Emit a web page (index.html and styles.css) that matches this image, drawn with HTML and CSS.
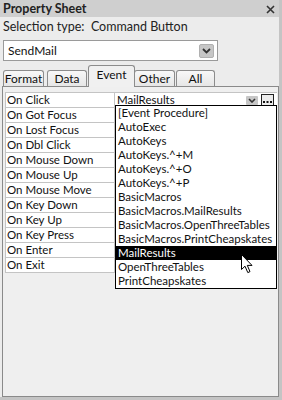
FILE: index.html
```html
<!DOCTYPE html>
<html>
<head>
<meta charset="utf-8">
<link rel="stylesheet" href="styles.css">
</head>
<body>
<div class="sheet">
  <div class="titlebar">
    <span class="title">Property Sheet</span>
    <svg class="close" width="9" height="9" viewBox="0 0 9 9"><path d="M1 1L8 8M8 1L1 8" stroke="#333" stroke-width="1.6"/></svg>
  </div>
  <div class="seltype">Selection type:&nbsp;&nbsp;Command Button</div>
  <div class="combo">
    <span class="combo-text">SendMail</span>
    <span class="dd-btn"><svg width="9" height="6" viewBox="0 0 9 6"><path d="M1 1L4.5 4.5L8 1" fill="none" stroke="#333" stroke-width="1.8"/></svg></span>
  </div>
  <div class="tabs">
    <div class="tab tab-format">Format</div>
    <div class="tab tab-data">Data</div>
    <div class="tab tab-event active">Event</div>
    <div class="tab tab-other">Other</div>
    <div class="tab tab-all">All</div>
  </div>
  <div class="page">
    <div class="grid">
      <div class="row"><div class="label">On Click</div><div class="value"><span class="val-text">MailResults</span><span class="cell-dd"><svg width="8" height="5" viewBox="0 0 8 5"><path d="M1 1L4 4L7 1" fill="none" stroke="#333" stroke-width="1.6"/></svg></span><span class="builder"><svg width="9" height="3" viewBox="0 0 9 3"><rect x="0" y="1" width="2" height="2" fill="#111"/><rect x="3.5" y="1" width="2" height="2" fill="#111"/><rect x="7" y="1" width="2" height="2" fill="#111"/></svg></span></div></div>
      <div class="row"><div class="label">On Got Focus</div><div class="value"></div></div>
      <div class="row"><div class="label">On Lost Focus</div><div class="value"></div></div>
      <div class="row"><div class="label">On Dbl Click</div><div class="value"></div></div>
      <div class="row"><div class="label">On Mouse Down</div><div class="value"></div></div>
      <div class="row"><div class="label">On Mouse Up</div><div class="value"></div></div>
      <div class="row"><div class="label">On Mouse Move</div><div class="value"></div></div>
      <div class="row"><div class="label">On Key Down</div><div class="value"></div></div>
      <div class="row"><div class="label">On Key Up</div><div class="value"></div></div>
      <div class="row"><div class="label">On Key Press</div><div class="value"></div></div>
      <div class="row"><div class="label">On Enter</div><div class="value"></div></div>
      <div class="row"><div class="label">On Exit</div><div class="value"></div></div>
    </div>
    <ul class="list">
      <li>[Event Procedure]</li>
      <li>AutoExec</li>
      <li>AutoKeys</li>
      <li>AutoKeys.^+M</li>
      <li>AutoKeys.^+O</li>
      <li>AutoKeys.^+P</li>
      <li>BasicMacros</li>
      <li>BasicMacros.MailResults</li>
      <li>BasicMacros.OpenThreeTables</li>
      <li>BasicMacros.PrintCheapskates</li>
      <li class="sel">MailResults</li>
      <li>OpenThreeTables</li>
      <li>PrintCheapskates</li>
    </ul>
    <svg class="cursor" width="13" height="20" viewBox="0 0 13 20"><path d="M0.5 0.5L0.5 15.5L4 12.2L6.8 18.6L9 17.6L6.3 11.4L11 11.4Z" fill="#fff" stroke="#000" stroke-width="1" stroke-linejoin="miter"/></svg>
  </div>
</div>
</body>
</html>
```

FILE: styles.css
```css
* { box-sizing: border-box; }
html, body { margin: 0; padding: 0; }
body {
  background: #c4c4c4;
  width: 282px;
  height: 400px;
  font-family: Lato, "Noto Sans", sans-serif;
  font-size: 11.5px;
  color: #111;
}
.sheet {
  width: 279px;
  height: 397px;
  background: #ececec;
  display: flex;
  flex-direction: column;
}
.titlebar {
  height: 17px;
  background: #cfcfcf;
  display: flex;
  align-items: center;
  justify-content: space-between;
  padding: 0 4px 0 3px;
}
.title {
  font-weight: bold;
  font-size: 12.5px;
  color: #222;
}
.close { margin-top: 2px; }
.seltype {
  height: 19px;
  padding: 2px 0 0 3px;
  font-size: 12.5px;
  color: #222;
  line-height: 16px;
}
.combo {
  margin: 4px 0 0 3px;
  width: 215px;
  height: 21px;
  background: #fff;
  border: 1px solid #9a9a9a;
  display: flex;
  align-items: center;
  justify-content: space-between;
  padding: 0 3px 0 4px;
}
.combo-text { font-size: 12px; }
.dd-btn {
  width: 15px;
  height: 14px;
  background: #c6c6c6;
  border: 1px solid #b0b0b0;
  border-radius: 2px;
  display: flex;
  align-items: center;
  justify-content: center;
}
.tabs {
  margin-top: 4px;
  height: 21px;
  display: flex;
  align-items: flex-end;
  position: relative;
  z-index: 1;
}
.tab {
  height: 16px;
  border: 1px solid #8c8c8c;
  border-bottom: none;
  border-radius: 3px 3px 0 0;
  background: linear-gradient(#f8f8f8, #e6e6e6);
  font-size: 12px;
  line-height: 15px;
  text-align: center;
  color: #111;
}
.tab-format { margin-left: 3px; width: 41px; }
.tab-data { margin-left: 3px; width: 40px; }
.tab-event { margin-left: 1px; width: 47px; }
.tab-other { margin-left: -1px; width: 41px; }
.tab-all { margin-left: 1px; width: 39px; }
.tab.active {
  height: 22px;
  margin-bottom: -1px;
  background: #f0f0f0;
  line-height: 17px;
}
.page {
  position: relative;
  margin-left: 2px;
  width: 277px;
  height: 311px;
  border: 1px solid #8a8a8a;
  background: #efefef;
  padding: 5px 0 0 2px;
}
.grid {
  width: 272px;
  background: #fff;
  border-top: 1px solid #c4c4c4;
  border-left: 1px solid #c4c4c4;
}
.row {
  height: 15px;
  display: flex;
  border-bottom: 1px solid #c4c4c4;
}
.label {
  width: 109px;
  border-right: 1px solid #c4c4c4;
  padding-left: 1px;
  line-height: 14px;
}
.value {
  flex: 1;
  display: flex;
  align-items: center;
  padding-left: 2px;
  line-height: 14px;
}
.val-text { flex: 1; }
.cell-dd {
  width: 12px;
  height: 9px;
  background: #c6c6c6;
  border-radius: 1px;
  display: flex;
  align-items: center;
  justify-content: center;
  margin-right: 3px;
}
.builder {
  width: 13px;
  height: 12px;
  border: 1px solid #222;
  background: #ececec;
  display: flex;
  align-items: flex-end;
  justify-content: center;
  padding-bottom: 2px;
  margin-right: 3px;
}
.list {
  position: absolute;
  left: 112px;
  top: 18px;
  width: 162px;
  margin: 0;
  padding: 0;
  list-style: none;
  background: #fff;
  border: 1px solid #000;
}
.list li {
  height: 14px;
  line-height: 14px;
  padding-left: 2px;
  white-space: nowrap;
}
.list li.sel {
  background: #000;
  color: #fff;
}
.cursor {
  position: absolute;
  left: 238px;
  top: 167px;
}
```
